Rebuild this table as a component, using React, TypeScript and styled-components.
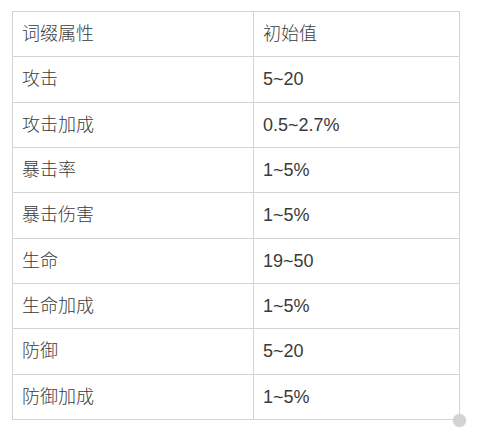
import React from 'react';
import styled, { createGlobalStyle } from 'styled-components';

const GlobalStyle = createGlobalStyle`
  html, body {
    margin: 0;
    padding: 0;
    background: #ffffff;
  }
  body {
    font-family: "Liberation Sans", "Noto Sans CJK SC", sans-serif;
    color: #333333;
  }
`;

const Page = styled.div`
  width: 478px;
  height: 434px;
  padding: 11px 0 0 12px;
  box-sizing: border-box;
`;

const TableWrap = styled.div`
  position: relative;
  width: 447px;
`;

const Table = styled.table`
  border-collapse: collapse;
  width: 447px;
  table-layout: fixed;
`;

const Row = styled.tr`
  height: 45.33px;
`;

const Cell = styled.td<{ $w: number }>`
  width: ${(p) => p.$w}px;
  border: 1px solid #d4d4d4;
  padding: 0 0 0 9px;
  font-size: 18px;
  font-weight: 300;
  line-height: 20px;
  color: #3a3a3a;
  vertical-align: middle;
  box-sizing: border-box;
`;

const Handle = styled.span`
  position: absolute;
  right: -7px;
  bottom: -7px;
  width: 13px;
  height: 13px;
  border-radius: 50%;
  background: #d2d2d2;
  box-shadow: 0 0 2px rgba(0, 0, 0, 0.12);
`;

const rows: [string, string][] = [
  ['词缀属性', '初始值'],
  ['攻击', '5~20'],
  ['攻击加成', '0.5~2.7%'],
  ['暴击率', '1~5%'],
  ['暴击伤害', '1~5%'],
  ['生命', '19~50'],
  ['生命加成', '1~5%'],
  ['防御', '5~20'],
  ['防御加成', '1~5%'],
];

export default function App() {
  return (
    <Page>
      <GlobalStyle />
      <TableWrap>
        <Table>
          <tbody>
            {rows.map(([k, v]) => (
              <Row key={k}>
                <Cell $w={241}>{k}</Cell>
                <Cell $w={206}>{v}</Cell>
              </Row>
            ))}
          </tbody>
        </Table>
        <Handle />
      </TableWrap>
    </Page>
  );
}
